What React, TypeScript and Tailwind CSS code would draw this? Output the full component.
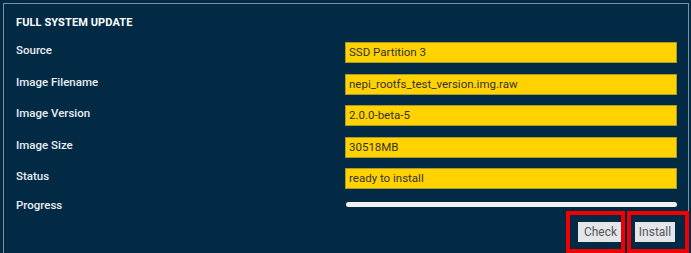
import React from "react";

const rows: [string, string][] = [
  ["Source", "SSD Partition 3"],
  ["Image Filename", "nepi_rootfs_test_version.img.raw"],
  ["Image Version", "2.0.0-beta-5"],
  ["Image Size", "30518MB"],
  ["Status", "ready to install"],
];

export default function App() {
  return (
    <div
      className="relative w-[691px] h-[253px] overflow-hidden bg-[#022a45] pt-[3px] pl-[3px] pr-[2px]"
      style={{ fontFamily: "Roboto, 'Liberation Sans', sans-serif" }}
    >
      <div className="h-[260px] border border-b-0 border-[#7f919f] pl-[12px] pr-[11px]">
        <div className="h-[33px] pt-[5px] flex items-center text-[11px] font-bold text-white tracking-[0.1px]">
          FULL SYSTEM UPDATE
        </div>
        {rows.map(([label, value]) => (
          <div key={label} className="h-[31.5px] flex items-center">
            <div className="w-[329px] mb-[4px] text-[11.5px] font-medium text-[#e8eef3]">{label}</div>
            <div className="flex-1 h-[21px] bg-[#ffd200] border border-[#a99a2a] px-[3px] flex items-center text-[11.5px] text-[#333]">
              {value}
            </div>
          </div>
        ))}
        <div className="h-[21.5px] flex items-center">
          <div className="w-[330px] mt-[1px] text-[11.5px] font-medium text-[#e8eef3]">Progress</div>
          <div className="flex-1 h-[5px] mb-[2px] rounded-full bg-[#f0f0f0]"></div>
        </div>
        <div className="mt-[6px] flex justify-end gap-[12px] pr-[2px]">
          <button className="w-[45px] h-[20px] bg-[#e4e7ea] text-[12px] text-[#555] flex items-center justify-center">
            Check
          </button>
          <button className="w-[40px] h-[20px] bg-[#e4e7ea] text-[12px] text-[#555] flex items-center justify-center">
            Install
          </button>
        </div>
      </div>
      <div className="absolute left-[566px] top-[211px] w-[59px] h-[42px] border-[4px] border-[#f00000]"></div>
      <div className="absolute left-[627px] top-[211px] w-[62px] h-[42px] border-[4px] border-[#f00000]"></div>
    </div>
  );
}
